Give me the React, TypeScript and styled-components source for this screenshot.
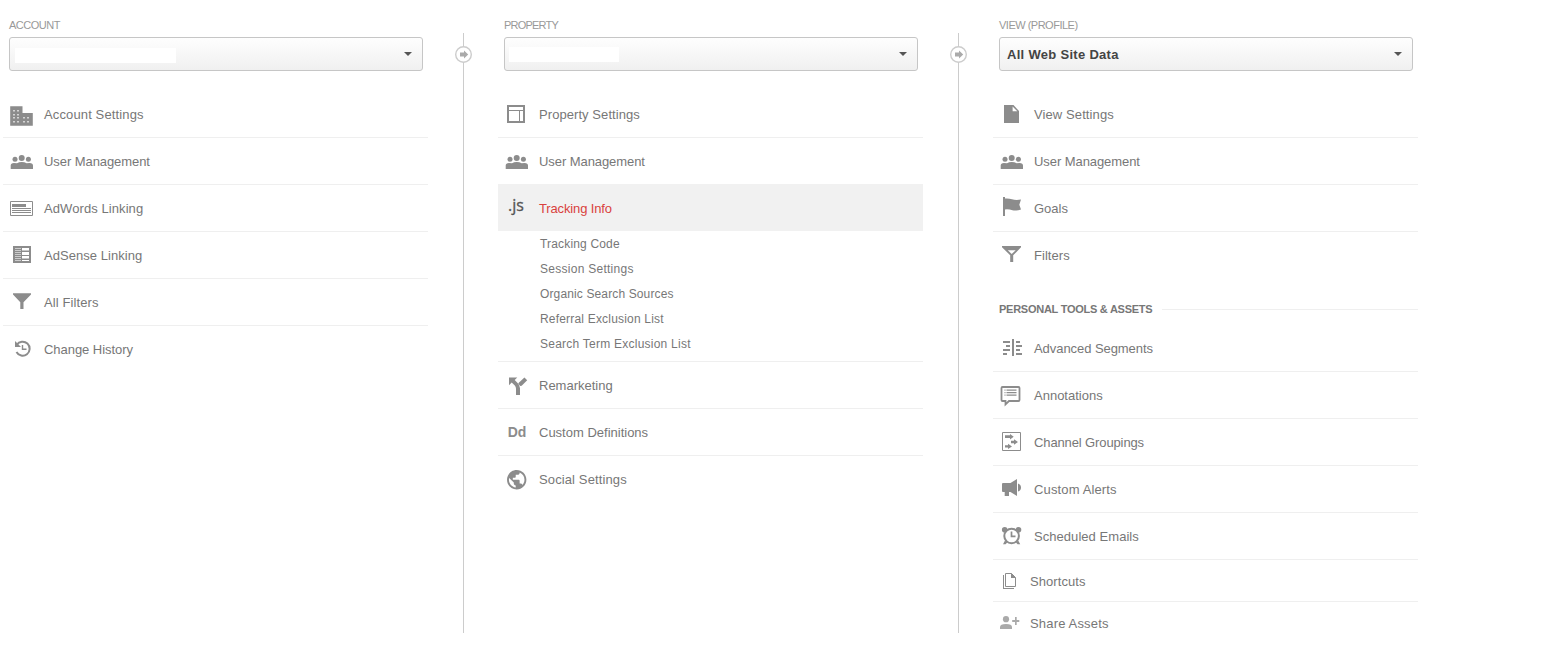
import React from "react";
import styled, { createGlobalStyle } from "styled-components";

const GREY = "#8c8c8c";

const GlobalStyle = createGlobalStyle`
  body {
    margin: 0;
    background: #fff;
    font-family: "Liberation Sans", Arial, sans-serif;
    color: #777;
  }
`;

const Page = styled.main`
  display: flex;
  align-items: flex-start;
  padding-left: 3px;
  height: 664px;
  box-sizing: border-box;
  overflow: hidden;
`;

const Column = styled.section`
  width: 425px;
  flex: none;
  padding-top: 17px;
`;

const ColumnLabel = styled.div<{ $spacing?: number }>`
  height: 20px;
  padding-left: 6px;
  font-size: 11px;
  line-height: 17px;
  letter-spacing: ${(p) => p.$spacing ?? -0.5}px;
  color: #999;
`;

const Select = styled.button`
  display: flex;
  align-items: center;
  justify-content: space-between;
  box-sizing: border-box;
  width: 414px;
  height: 34px;
  margin: 0 0 20px 6px;
  padding: 0 10px 0 7px;
  border: 1px solid #c6c6c6;
  border-radius: 3px;
  background: linear-gradient(#fefefe, #f0f0f0);
  font: bold 13px/32px "Liberation Sans", Arial, sans-serif;
  letter-spacing: 0.3px;
  color: #444;
`;

const SelectText = styled.span`
  padding-top: 2px;
`;

const BlankName = styled.span<{ $width: number; $lift?: number }>`
  width: ${(p) => p.$width}px;
  height: 15px;
  margin: ${(p) => (p.$lift ? "0 0 0 -3px" : "2px 0 0 -2px")};
  background: #fff;
`;

const Caret = styled.span`
  border: 4px solid transparent;
  border-top-color: #555;
  border-bottom: 0;
`;

const Divider = styled.div`
  position: relative;
  flex: none;
  width: 1px;
  height: 600px;
  margin: 33px 34px 0 35px;
  background: #ccc;
`;

const DividerBadge = styled.svg`
  position: absolute;
  left: -8px;
  top: 13px;
`;

const Menu = styled.nav`
  display: flex;
  flex-direction: column;
`;

const Row = styled.a<{ $active?: boolean; $last?: boolean; $compact?: boolean }>`
  display: flex;
  align-items: center;
  gap: ${(p) => (p.$compact ? 6 : 10)}px;
  box-sizing: border-box;
  height: ${(p) => (p.$compact ? 42 : p.$active ? 46 : 47)}px;
  padding-left: 5px;
  border-bottom: ${(p) => (p.$active ? "0" : p.$last ? "1px solid transparent" : "1px solid #efefef")};
  background: ${(p) => (p.$active ? "#f1f1f1" : "transparent")};
  box-shadow: ${(p) => (p.$active ? "0 -1px #f1f1f1" : "none")};
  font-size: 13px;
  color: ${(p) => (p.$active ? "#d9413d" : "#777")};
`;

const RowText = styled.span<{ $spacing?: number; $compact?: boolean }>`
  letter-spacing: ${(p) => p.$spacing ?? 0}px;
  padding-top: ${(p) => (p.$compact ? 2 : 0)}px;
`;

const Icon = styled.svg`
  width: 26px;
  height: 26px;
  flex: none;
`;

const SubMenu = styled.div`
  display: flex;
  flex-direction: column;
  padding: 1px 0 4px 42px;
  border-bottom: 1px solid #efefef;
`;

const SubItem = styled.a<{ $spacing: number }>`
  font-size: 12px;
  line-height: 25px;
  letter-spacing: ${(p) => p.$spacing}px;
  color: #777;
`;

const SectionTitle = styled.h2`
  display: flex;
  align-items: center;
  gap: 10px;
  height: 46px;
  margin: 0;
  padding: 14px 0 0 6px;
  box-sizing: border-box;
  font-size: 11px;
  letter-spacing: -0.26px;
  color: #777;
  &::after {
    content: "";
    flex: 1;
    height: 1px;
    background: #efefef;
  }
`;

const range = (n: number) => Array.from({ length: n }, (_, i) => i);

const icons: Record<string, React.ReactNode> = {
  building: (
    <>
      <path d="M2.200 5.300h12.300V12H24.800v12.700H2.200z" />
      <g fill="#d4d4d4">
        {range(4).map((i) => (
          <React.Fragment key={i}>
            <path d={`M5 ${9 + Math.round(i * 3.7)}h2v1.500h-2zM9 ${9 + Math.round(i * 3.7)}h2v1.500h-2z`} />
            {i > 1 && (
              <path d={`M15 ${9 + Math.round(i * 3.7)}h2v1.500h-2zM19 ${9 + Math.round(i * 3.7)}h2v1.500h-2z`} />
            )}
          </React.Fragment>
        ))}
      </g>
    </>
  ),
  users: (
    <>
      <circle cx="13.7" cy="9.9" r="3" />
      <circle cx="7" cy="11.300" r="2.500" />
      <circle cx="20.400" cy="11.300" r="2.500" />
      <path d="M2.700 21v-3.500q0-2.600 3.300-2.600 2 0 3 .3 2-1.200 4.800-1.200t4.800 1.200q1-.3 3-.3 3.400 0 3.400 2.600V21z" />
    </>
  ),
  adwords: (
    <>
      <path d="M2.500 6.500h22v14h-22z" fill="none" stroke={GREY} />
      <path d="M4 9h14v3H4zM4 13h19v1H4zM4 15h19v1H4zM4 17h19v1H4z" />
    </>
  ),
  adsense: (
    <>
      <path d="M5 4h18v17H5z" />
      <path d="M14 6h7v2.600h-7zM14 10h7v3h-7zM14 14h7v2.600h-7zM14 18h7v1h-7z" fill="#fff" />
      <path d="M7 6h6v1H7zM7 8h6v1H7zM7 10h6v1H7zM7 12h6v1H7zM7 14h6v1H7zM7 16h6v1H7zM7 18h6v1H7z" fill="#ccc" />
    </>
  ),
  funnel: <path d="M5 4.300h18v1.200l-7.500 7.700V20h-3.200v-6.800L5 5.500z" />,
  history: (
    <>
      <path d="M8.800 8.800A7 7 0 1 1 8.500 16" fill="none" stroke={GREY} strokeWidth="2" />
      <path d="M7 5v6h6l-2-2.100-1.700-1.600z" />
      <path d="M14.500 9v4.300h4" fill="none" stroke={GREY} strokeWidth="1.400" />
    </>
  ),
  layout: (
    <>
      <path d="M5 5h16v16H5z" fill="none" stroke={GREY} strokeWidth="2" />
      <path d="M6 9h14v1H6zM16 10h1v10h-1z" />
    </>
  ),
  js: (
    <text x="5" y="16" fontFamily="Open Sans, sans-serif" fontSize="16" fill="#555" stroke="#555" strokeWidth=".3">.js</text>
  ),
  fork: (
    <>
      <path d="M6 5.500h8.300l-2.600 2.600 2.700 2.600q2.600 2.400 2.600 5.500V23h-4v-6.300q0-1.800-1.200-3.200L8.700 10.600 6 13.300z" />
      <path d="M21.400 5.500l2.800 2.800-5.500 5.400-1.500.4-2-2.500.6-.8z" />
    </>
  ),
  dd: (
    <text x="4.800" y="18" fontFamily="Liberation Sans, Arial, sans-serif" fontWeight="bold" fontSize="14" textLength="18.500">Dd</text>
  ),
  globe: (
    <path
      transform="translate(2.060 2.060) scale(.97)"
      d="M12 2C6.480 2 2 6.480 2 12s4.480 10 10 10 10-4.480 10-10S17.520 2 12 2zm-1 17.930c-3.950-.490-7-3.850-7-7.930 0-.620.080-1.210.210-1.790L9 15v1c0 1.100.900 2 2 2v1.930zm6.900-2.540c-.260-.810-1-1.390-1.900-1.390h-1v-3c0-.550-.450-1-1-1H8v-2h2c.550 0 1-.450 1-1V7h2c1.100 0 2-.900 2-2v-.410c2.930 1.190 5 4.060 5 7.410 0 2.080-.800 3.970-2.100 5.390z"
    />
  ),
  doc: (
    <>
      <path d="M6 4h9.500l5.500 6v12H6z" />
      <path d="M14.600 5.600v4.700h4.700z" fill="#fff" />
    </>
  ),
  flag: <path d="M5 2h2v1.500q4-.3 7 .7 3.500 1.400 9 .4l-1.700 5.200L23 14.500q-5 1.500-8.500.8Q10.500 14 7 14.500V21H5z" />,
  filter: (
    <>
      <path d="M4 4h19v1.300l-7.800 8V20h-3v-6.700L4 5.300z" />
      <path d="M9.800 8.200h7.900L13.700 12z" fill="#fff" />
    </>
  ),
  segments: (
    <path d="M14 4h2v17h-2zM5 6h7v2H5zM8 10h4v2H8zM5 14h7v2H5zM5 18h4v2H5zM18 6h4v2h-4zM18 10h6v2h-6zM18 14h4v2h-4zM18 18h6v2h-6z" />
  ),
  note: (
    <>
      <path d="M4.500 5h16q1 0 1 1v12q0 1-1 1h-9.500l-3.500 3.300V19h-3q-1 0-1-1V6q0-1 1-1z" fill="none" stroke={GREY} strokeWidth="1.800" />
      <path d="M6.500 7.500h1v1.300h-1zM8.500 7.500h10v1.300h-10zM6.500 10h1v1.300h-1zM8.500 10h10v1.300h-10zM6.500 12.500h1v1.300h-1zM8.500 12.500h10v1.300h-10z" />
    </>
  ),
  channels: (
    <>
      <path d="M4.500 3.500h18v18h-18z" fill="none" stroke={GREY} />
      <path d="M7 6.300h5V5l3.700 2.700-3.700 2.700V9H7zM13 11.800h3v-1.500l4 2.700-4 2.700v-1.500h-3zM7 16.200h3v-1.500l4 2.700-4 2.600v-1.400H7z" />
    </>
  ),
  megaphone: (
    <path d="M4 8q0-1 1-1h7.500L19 3v17l-6.500-4H11v4H6.700v-4H5q-1 0-1-1zM20 7.500q3 1 3 4t-3 4z" />
  ),
  alarm: (
    <>
      <circle cx="6.700" cy="6.800" r="2.800" />
      <circle cx="20.500" cy="6.800" r="2.800" />
      <path d="M7 17.500l2.300 2L7.600 21.200H5zM20.200 17.500l-2.300 2 1.700 1.700h2.600z" />
      <circle cx="13.600" cy="13" r="7.300" fill="#fff" stroke={GREY} strokeWidth="2" />
      <path d="M13.500 8.500v4.900h4" fill="none" stroke={GREY} strokeWidth="1.700" />
    </>
  ),
  pages: (
    <>
      <path d="M7.500 5.500h6l4 4v9h-10z" fill="none" stroke={GREY} />
      <path d="M13 5l5 5h-5zM5 7h1v13h10v1H5z" />
    </>
  ),
  share: (
    <g fill="#aaa">
      <circle cx="8" cy="9.200" r="3.100" />
      <path d="M2 19v-2q0-3 6-3t6 3v2zM17 7h1.700v3h2.600v2h-2.600v3H17v-3h-2.800v-2H17z" />
    </g>
  ),
};

type Item = { icon: string; text: string; active?: boolean; last?: boolean; compact?: boolean; spacing?: number };

const MenuRow = ({ icon, text, active, last, compact, spacing }: Item) => (
  <Row $active={active} $last={last} $compact={compact}>
    <Icon viewBox="0 0 26 26" fill={GREY}>{icons[icon]}</Icon>
    <RowText $spacing={spacing} $compact={compact}>{text}</RowText>
  </Row>
);

const ColumnDivider = () => (
  <Divider>
    <DividerBadge width="17" height="17" viewBox="0 0 17 17">
      <circle cx="8.500" cy="8.500" r="7.800" fill="#fff" stroke="#ccc" strokeWidth="1.400" />
      <path d="M5 6.500h4V4.600l4.200 3.900L9 12.400v-1.900H5z" fill="#aaa" />
    </DividerBadge>
  </Divider>
);

const accountItems: Item[] = [
  { icon: "building", text: "Account Settings", spacing: 0.13 },
  { icon: "users", text: "User Management", spacing: -0.07 },
  { icon: "adwords", text: "AdWords Linking", spacing: 0.08 },
  { icon: "adsense", text: "AdSense Linking", spacing: 0.04 },
  { icon: "funnel", text: "All Filters", spacing: 0.1 },
  { icon: "history", text: "Change History", last: true, spacing: -0.04 },
];

const trackingItems = [
  { text: "Tracking Code", spacing: 0.17 },
  { text: "Session Settings", spacing: 0.27 },
  { text: "Organic Search Sources", spacing: 0.13 },
  { text: "Referral Exclusion List", spacing: 0.19 },
  { text: "Search Term Exclusion List", spacing: 0.24 },
];

const viewItems: Item[] = [
  { icon: "doc", text: "View Settings", spacing: 0.1 },
  { icon: "users", text: "User Management", spacing: -0.07 },
  { icon: "flag", text: "Goals" },
  { icon: "filter", text: "Filters", last: true, spacing: 0.05 },
];

const toolItems: Item[] = [
  { icon: "segments", text: "Advanced Segments", spacing: -0.06 },
  { icon: "note", text: "Annotations" },
  { icon: "channels", text: "Channel Groupings", spacing: -0.12 },
  { icon: "megaphone", text: "Custom Alerts", spacing: 0.14 },
  { icon: "alarm", text: "Scheduled Emails", spacing: 0.05 },
  { icon: "pages", text: "Shortcuts", compact: true, spacing: 0.08 },
  { icon: "share", text: "Share Assets", compact: true, last: true, spacing: 0.17 },
];

export default function App() {
  return (
    <>
      <GlobalStyle />
      <Page>
        <Column>
          <ColumnLabel>ACCOUNT</ColumnLabel>
          <Select>
            <BlankName $width={161} />
            <Caret />
          </Select>
          <Menu>
            {accountItems.map((item) => <MenuRow key={item.text} {...item} />)}
          </Menu>
        </Column>
        <ColumnDivider />
        <Column>
          <ColumnLabel $spacing={-0.8}>PROPERTY</ColumnLabel>
          <Select>
            <BlankName $width={110} $lift={1} />
            <Caret />
          </Select>
          <Menu>
            <MenuRow icon="layout" text="Property Settings" spacing={0.07} />
            <MenuRow icon="users" text="User Management" spacing={-0.07} />
            <MenuRow icon="js" text="Tracking Info" active spacing={-0.14} />
            <SubMenu>
              {trackingItems.map(({ text, spacing }) => <SubItem key={text} $spacing={spacing}>{text}</SubItem>)}
            </SubMenu>
            <MenuRow icon="fork" text="Remarketing" />
            <MenuRow icon="dd" text="Custom Definitions" />
            <MenuRow icon="globe" text="Social Settings" last spacing={0.12} />
          </Menu>
        </Column>
        <ColumnDivider />
        <Column>
          <ColumnLabel>VIEW (PROFILE)</ColumnLabel>
          <Select>
            <SelectText>All Web Site Data</SelectText>
            <Caret />
          </Select>
          <Menu>
            {viewItems.map((item) => <MenuRow key={item.text} {...item} />)}
            <SectionTitle>PERSONAL TOOLS &amp; ASSETS</SectionTitle>
            {toolItems.map((item) => <MenuRow key={item.text} {...item} />)}
          </Menu>
        </Column>
      </Page>
    </>
  );
}
